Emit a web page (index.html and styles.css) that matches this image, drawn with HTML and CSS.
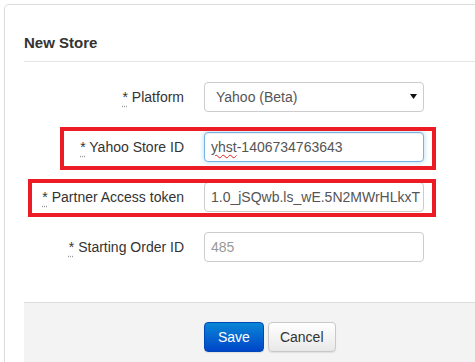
FILE: index.html
```html
<!DOCTYPE html>
<html>
    <head>
        <title>New Store</title>
        <link rel="stylesheet" href="styles.css">
    </head>
    <body>
        <div class="card">
            <div class="card-head">
                <h3>New Store</h3>
            </div>
            <form class="store-form">
                <div class="form-body">
                    <div class="row">
                        <label class="row-label" for="platform"><abbr title="required">*</abbr> Platform</label>
                        <div class="select-wrap">
                            <select id="platform" name="platform">
                                <option value="yahoo" selected>Yahoo (Beta)</option>
                            </select>
                            <svg class="caret" width="7" height="5" viewBox="0 0 7 5"><path d="M0 0 L7 0 L3.5 5 Z" fill="#111"/></svg>
                        </div>
                    </div>
                    <div class="row">
                        <span class="mark mark-store"></span>
                        <label class="row-label" for="storeId"><abbr title="required">*</abbr> Yahoo Store ID</label>
                        <div class="field field-focus" id="storeId"><span class="typo">yhst</span>-1406734763643</div>
                    </div>
                    <div class="row">
                        <span class="mark mark-token"></span>
                        <label class="row-label" for="token"><abbr title="required">*</abbr> Partner Access token</label>
                        <input class="field field-long" type="text" id="token" name="token" value="1.0_jSQwb.ls_wE.5N2MWrHLkxT">
                    </div>
                    <div class="row">
                        <label class="row-label" for="startOrder"><abbr title="required">*</abbr> Starting Order ID</label>
                        <input class="field" type="text" id="startOrder" name="startOrder" placeholder="485">
                    </div>
                </div>
                <div class="form-foot">
                    <button type="submit" class="btn btn-primary">Save</button>
                    <button type="button" class="btn">Cancel</button>
                </div>
            </form>
        </div>
    </body>
</html>
```

FILE: styles.css
```css
html {
    height:100%;
}

body {
    margin:0;
    padding:4px 0 0 4px;
    background:#fff;
    overflow:hidden;
    font-family:"Liberation Sans", Arial, sans-serif;
    font-size:14px;
    color:#333;
}

.card {
    width:560px;
    height:420px;
    border:1px solid #dcdcdc;
    border-radius:5px;
    box-shadow:0 0 2px rgba(0,0,0,0.04);
    padding-left:19px;
    box-sizing:border-box;
}

.card-head {
    padding:28px 0 8px 0;
    border-bottom:1px solid #e5e5e5;
}

.card-head h3 {
    margin:0;
    font-size:15px;
    line-height:20px;
    font-weight:bold;
    color:#333;
}

.form-body {
    display:flex;
    flex-direction:column;
    gap:20px;
    padding:20px 0 40px 0;
}

.row {
    position:relative;
    display:flex;
    align-items:center;
    height:30px;
}

.row-label {
    width:180px;
    box-sizing:border-box;
    padding-right:20px;
    text-align:right;
    line-height:30px;
    color:#333;
}

abbr[title] {
    text-decoration:underline dotted;
    text-underline-offset:4px;
    text-decoration-color:#999;
}

.field,
.select-wrap select {
    width:220px;
    height:30px;
    box-sizing:border-box;
    border:1px solid #ccc;
    border-radius:4px;
    background:#fff;
    font-family:"Liberation Sans", Arial, sans-serif;
    font-size:14px;
    color:#555;
    padding:0 6px;
    line-height:28px;
    margin:0;
    outline:none;
}

.field::placeholder {
    color:#999;
}

.field-focus {
    border-color:#76b3e6;
    box-shadow:inset 0 1px 1px rgba(0,0,0,0.075), 0 0 5px rgba(102,175,233,0.5);
    white-space:nowrap;
}

.field-long {
    padding-right:1px;
}

.typo {
    text-decoration:underline wavy #e02020;
    text-decoration-thickness:1px;
    text-underline-offset:2px;
}

.select-wrap {
    position:relative;
}

.select-wrap select {
    -webkit-appearance:none;
    appearance:none;
    padding-left:11px;
}

.caret {
    position:absolute;
    right:7px;
    top:12px;
    pointer-events:none;
}

/* annotation boxes drawn over the rows */
.mark {
    position:absolute;
    border:4px solid #ec1c24;
    box-sizing:border-box;
    pointer-events:none;
}

.mark-store {
    left:36px;
    top:-5px;
    width:376px;
    height:43px;
}

.mark-token {
    left:4px;
    top:-3px;
    width:408px;
    height:38px;
}

.form-foot {
    border-top:1px solid #dedede;
    background:#f3f3f3;
    padding:19px 0 40px 180px;
    display:flex;
    gap:4px;
}

.btn {
    height:30px;
    padding:0 11px;
    border:1px solid #c8c8c8;
    border-radius:4px;
    background:linear-gradient(#ffffff, #e8e8e8);
    font-family:"Liberation Sans", Arial, sans-serif;
    font-size:14px;
    color:#333;
    cursor:pointer;
    box-shadow:0 1px 1px rgba(0,0,0,0.08);
}

.btn-primary {
    border-color:#0047b8;
    background:linear-gradient(#0a86d6, #0046c8);
    color:#fff;
    padding:0 13px;
}
```
